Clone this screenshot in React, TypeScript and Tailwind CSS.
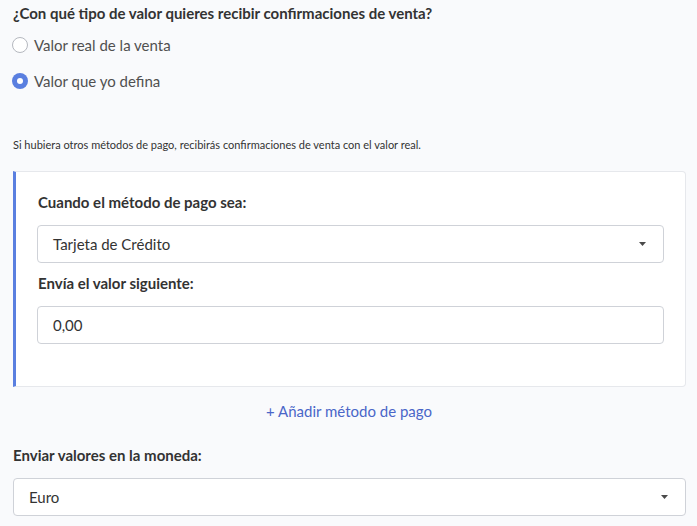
import { useState } from 'react'

function Caret() {
  return (
    <svg width="7" height="4" viewBox="0 0 7 4" className="shrink-0">
      <path d="M0 0h7L3.5 4z" fill="#4a4a4a" />
    </svg>
  )
}

function Radio({ checked, label, onClick }: { checked: boolean; label: string; onClick: () => void }) {
  return (
    <button type="button" onClick={onClick} className="flex h-[20px] items-center gap-[6px] text-left">
      {checked ? (
        <span className="flex h-4 w-4 items-center justify-center rounded-full bg-[#5a7fe0]">
          <span className="h-[6px] w-[6px] rounded-full bg-white" />
        </span>
      ) : (
        <span className="h-4 w-4 rounded-full border border-[#b5b8bf] bg-white" />
      )}
      <span className="text-[15px] leading-[20px] text-[#505050]">{label}</span>
    </button>
  )
}

function SelectBox({ value }: { value: string }) {
  return (
    <div className="flex h-[38px] items-center justify-between rounded-[4px] border border-[#cfd2d8] bg-white pl-[15px] pr-[17px]">
      <span className="text-[15px] text-[#333]">{value}</span>
      <Caret />
    </div>
  )
}

export default function App() {
  const [mode, setMode] = useState<'real' | 'custom'>('custom')

  return (
    <div
      className="min-h-[526px] bg-[#f9fafc] pl-[12px] pr-[11px] pt-[4px] text-[#333]"
      style={{ fontFamily: 'Lato, "Noto Sans", sans-serif' }}
    >
      <h2 className="pl-px text-[15px] font-bold leading-[18px] text-[#333]">
        ¿Con qué tipo de valor quieres recibir confirmaciones de venta?
      </h2>

      {/* Radio options */}
      <div className="mt-[13px] flex flex-col gap-[16px]">
        <Radio checked={mode === 'real'} label="Valor real de la venta" onClick={() => setMode('real')} />
        <Radio checked={mode === 'custom'} label="Valor que yo defina" onClick={() => setMode('custom')} />
      </div>

      <p className="mt-[47px] pl-px text-[11px] leading-[14px] text-[#333]">
        Si hubiera otros métodos de pago, recibirás confirmaciones de venta con el valor real.
      </p>

      {/* Payment method card */}
      <div className="ml-px mt-[19px] rounded-r-[4px] border border-l-[3px] border-[#e6e8ec] border-l-[#5a7fe0] bg-white pb-[42px] pl-[21px] pr-[21px] pt-[21px]">
        <label className="block pl-px text-[15px] font-bold leading-[18px] text-[#333]">
          Cuando el método de pago sea:
        </label>
        <div className="mt-[14px]">
          <SelectBox value="Tarjeta de Crédito" />
        </div>
        <label className="mt-[11px] block pl-px text-[15px] font-bold leading-[18px] text-[#333]">
          Envía el valor siguiente:
        </label>
        <div className="mt-[14px] flex h-[38px] items-center rounded-[4px] border border-[#cfd2d8] bg-white pl-[15px]">
          <span className="text-[15px] text-[#333]">0,00</span>
        </div>
      </div>

      <div className="mt-[14px] flex h-[20px] items-center justify-center">
        <button type="button" className="text-[15px] leading-[20px] text-[#4a66c8]">
          + Añadir método de pago
        </button>
      </div>

      <label className="mt-[25px] block pl-px text-[15px] font-bold leading-[18px] text-[#333]">
        Enviar valores en la moneda:
      </label>
      <div className="ml-px mt-[14px]">
        <SelectBox value="Euro" />
      </div>
    </div>
  )
}
